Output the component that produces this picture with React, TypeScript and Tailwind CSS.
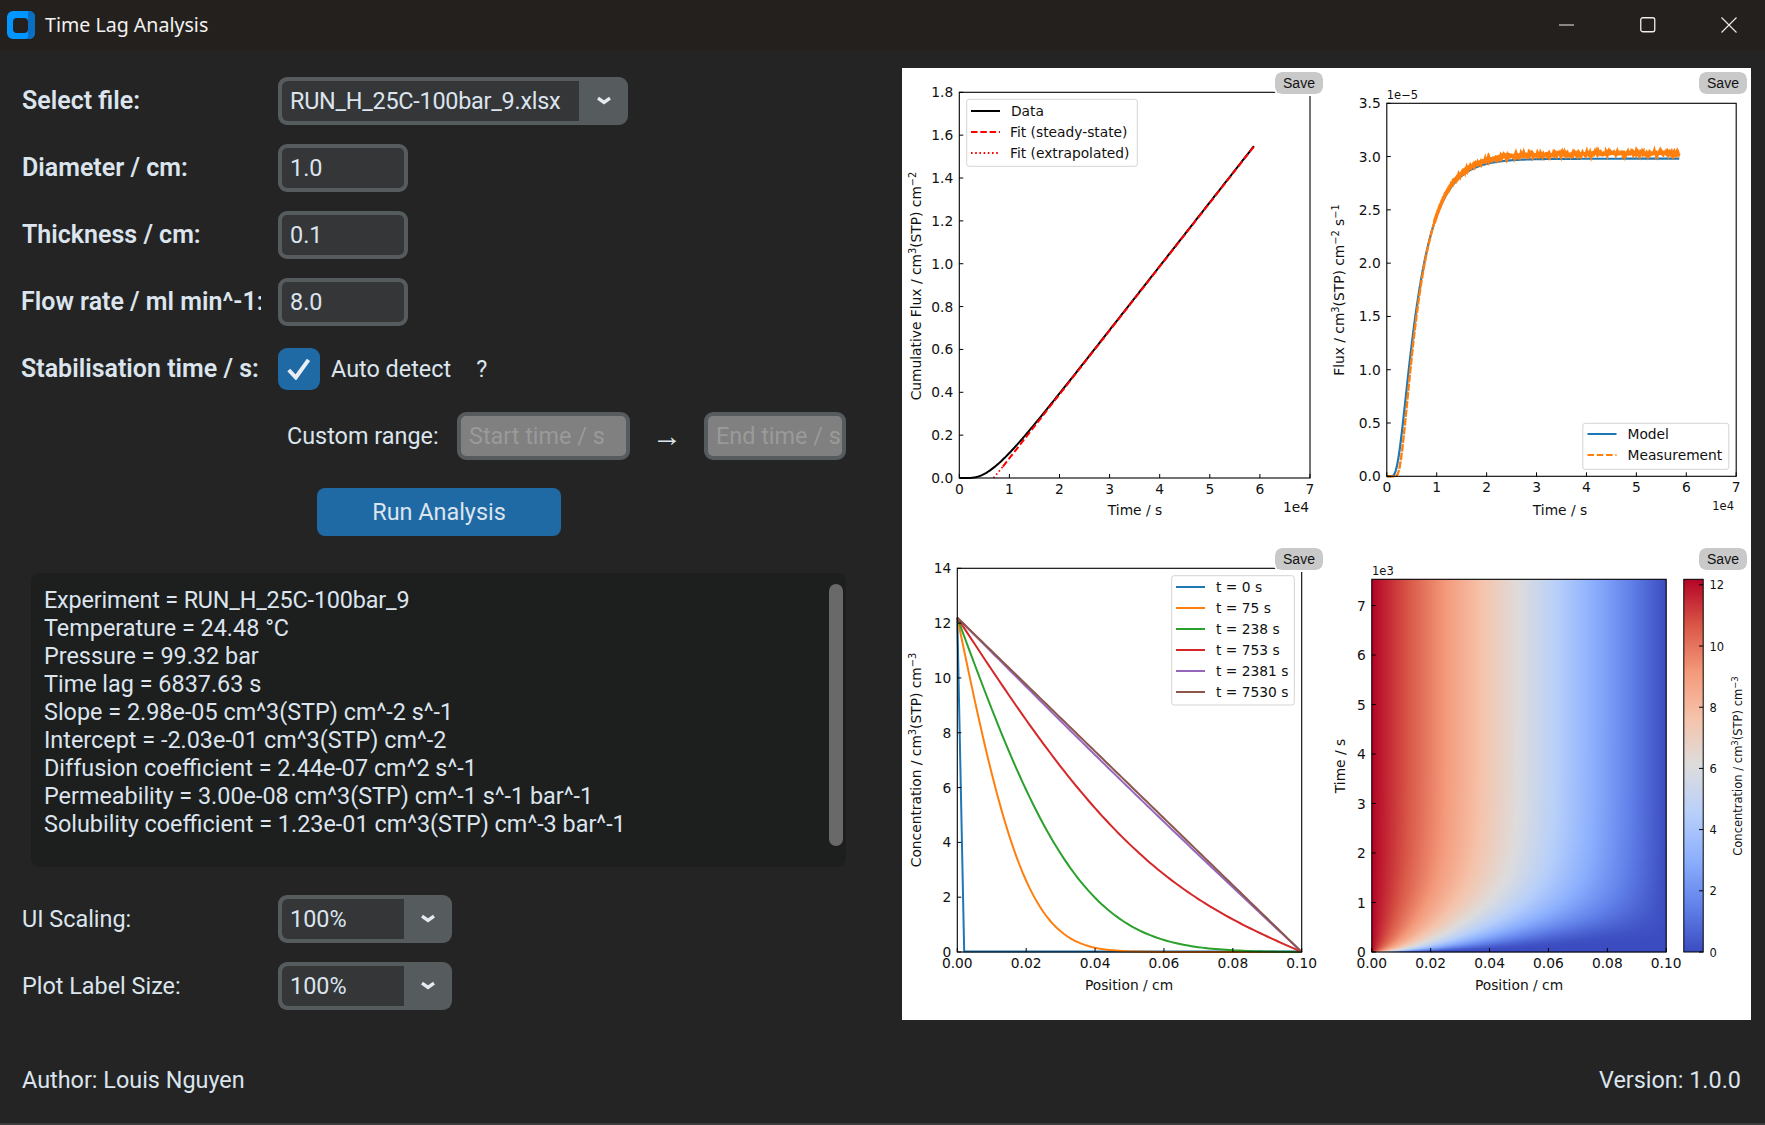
import React from "react";

const L = 0.1;
const C0 = 12.2;
function conc(x: number, tau: number) {
  let s = 1 - x / L;
  for (let n = 1; n <= 70; n++) {
    const e = Math.exp(-n * n * Math.PI * Math.PI * tau);
    if (e < 1e-7) break;
    s -= (2 / (n * Math.PI)) * Math.sin((n * Math.PI * x) / L) * e;
  }
  return C0 * Math.max(0, s);
}
const KC = 1.72e-4;
const KF = 2.44e-5;
function flux(t: number) {
  if (t <= 0) return 0;
  const tau = KF * t;
  let s = 1;
  for (let n = 1; n <= 60; n++) {
    const e = Math.exp(-n * n * Math.PI * Math.PI * tau);
    if (e < 1e-7) break;
    s += 2 * (n % 2 ? -1 : 1) * e;
  }
  return Math.max(0, 2.98 * s);
}
function cum(t: number) {
  if (t <= 0) return 0;
  let q = 0;
  const tau = KF * t;
  let s = t - 1 / (6 * KF);
  for (let n = 1; n <= 60; n++) {
    const e = Math.exp(-n * n * Math.PI * Math.PI * tau);
    if (e < 1e-7) break;
    s -= ((2 / (KF * Math.PI * Math.PI)) * (n % 2 ? -1 : 1) * e) / (n * n);
  }
  q = 2.98e-5 * s;
  return Math.max(0, q);
}
const CW: [number, number, number, number][] = [
  [0, 59, 76, 192],
  [0.125, 98, 130, 234],
  [0.25, 141, 176, 254],
  [0.375, 184, 208, 249],
  [0.5, 221, 220, 220],
  [0.625, 245, 196, 172],
  [0.75, 244, 154, 123],
  [0.875, 217, 88, 71],
  [1, 180, 4, 38],
];
function coolwarm(v: number) {
  const t = Math.min(1, Math.max(0, v));
  for (let i = 1; i < CW.length; i++) {
    if (t <= CW[i][0]) {
      const a = CW[i - 1];
      const b = CW[i];
      const f = (t - a[0]) / (b[0] - a[0]);
      return `rgb(${Math.round(a[1] + (b[1] - a[1]) * f)},${Math.round(a[2] + (b[2] - a[2]) * f)},${Math.round(a[3] + (b[3] - a[3]) * f)})`;
    }
  }
  return "rgb(180,4,38)";
}

type Box = { x0: number; x1: number; y0: number; y1: number };
const fmt = (p: number) => p.toFixed(2);
const line = (pts: [number, number][]) => pts.map((q, i) => `${i ? "L" : "M"}${fmt(q[0])} ${fmt(q[1])}`).join("");

function Frame({ b, xt, yt }: { b: Box; xt: { at: number; label: string }[]; yt: { at: number; label: string }[] }) {
  return (
    <g>
      <rect x={b.x0} y={b.y1} width={b.x1 - b.x0} height={b.y0 - b.y1} fill="none" stroke="#000" strokeWidth={1.1} />
      {xt.map((t) => (
        <g key={t.label}>
          <line x1={t.at} x2={t.at} y1={b.y0} y2={b.y0 - 4} stroke="#000" />
          <text x={t.at} y={b.y0 + 16} textAnchor="middle">{t.label}</text>
        </g>
      ))}
      {yt.map((t) => (
        <g key={t.label}>
          <line x1={b.x0} x2={b.x0 + 4} y1={t.at} y2={t.at} stroke="#000" />
          <text x={b.x0 - 6} y={t.at + 5} textAnchor="end">{t.label}</text>
        </g>
      ))}
    </g>
  );
}

function ticks(vals: number[], lo: number, hi: number, a: number, b: number, d: number) {
  return vals.map((v) => ({ at: a + ((v - lo) / (hi - lo)) * (b - a), label: v.toFixed(d) }));
}

function Legend({ x, y, w, h, rows }: { x: number; y: number; w: number; h: number; rows: { c: string; dash?: string; label: string; y: number; lx: number; tx: number }[] }) {
  return (
    <g>
      <rect x={x} y={y} width={w} height={h} rx={2.5} fill="#fff" stroke="#d4d4d4" strokeWidth={1} />
      {rows.map((r) => (
        <g key={r.label}>
          <line x1={r.lx} x2={r.lx + 29} y1={r.y} y2={r.y} stroke={r.c} strokeWidth={2} strokeDasharray={r.dash} />
          <text x={r.tx} y={r.y + 4.5}>{r.label}</text>
        </g>
      ))}
    </g>
  );
}

const SVG_CLASS = "block w-full h-full font-[family-name:'DejaVu_Sans',sans-serif] text-[13.8px] fill-[#111]";

function Plot1() {
  const b: Box = { x0: 57.3, x1: 408, y0: 410, y1: 24.3 };
  const X = (t: number) => b.x0 + (t / 7e4) * (b.x1 - b.x0);
  const Y = (v: number) => b.y0 - (v / 1.8) * (b.y0 - b.y1);
  const data: [number, number][] = [];
  for (let t = 0; t <= 58800; t += 200) data.push([X(t), Y(cum(t))]);
  const fit = (t: number) => 2.98e-5 * (t - 6837.63) - 0.002;
  return (
    <svg viewBox="0 0 424.5 476" className={SVG_CLASS}>
      <path d={line(data)} fill="none" stroke="#000" strokeWidth={2} />
      <path d={line([[X(6837), Y(0)], [X(8700), Y(fit(8700))]])} fill="none" stroke="#f00" strokeWidth={1.8} strokeDasharray="1.6 2.6" />
      <path d={line([[X(8700), Y(fit(8700))], [X(58800), Y(fit(58800))]])} fill="none" stroke="#f00" strokeWidth={2} strokeDasharray="6.5 2.8" />
      <Frame b={b} xt={ticks([0, 1, 2, 3, 4, 5, 6, 7], 0, 7, b.x0, b.x1, 0)} yt={ticks([0, 0.2, 0.4, 0.6, 0.8, 1, 1.2, 1.4, 1.6, 1.8], 0, 1.8, b.y0, b.y1, 1)} />
      <Legend x={64.7} y={31.3} w={170.6} h={67} rows={[
        { c: "#000", label: "Data", y: 43, lx: 69, tx: 109 },
        { c: "#f00", dash: "6.5 2.8", label: "Fit (steady-state)", y: 64, lx: 69, tx: 108 },
        { c: "#f00", dash: "1.6 2.6", label: "Fit (extrapolated)", y: 85, lx: 69, tx: 108 },
      ]} />
      <text x={233} y={447} textAnchor="middle">Time / s</text>
      <text x={407} y={444} textAnchor="end">1e4</text>
      <text transform="translate(18.5 218) rotate(-90)" textAnchor="middle">
        Cumulative Flux / cm<tspan dy={-5} fontSize={9.8}>3</tspan><tspan dy={5}>(STP) cm</tspan><tspan dy={-5} fontSize={9.8}>−2</tspan>
      </text>
    </svg>
  );
}

function Plot2() {
  const b: Box = { x0: 59.8, x1: 409.2, y0: 408.3, y1: 35.3 };
  const X = (t: number) => b.x0 + (t / 7e4) * (b.x1 - b.x0);
  const Y = (v: number) => b.y0 - (v / 3.5) * (b.y0 - b.y1);
  const model: [number, number][] = [];
  for (let t = 0; t <= 58600; t += 200) model.push([X(t), Y(flux(t))]);
  let seed = 12345;
  const rnd = () => {
    seed = (seed * 1103515245 + 12345) & 0x7fffffff;
    return seed / 0x7fffffff - 0.5;
  };
  const meas = (t: number) => {
    const delay = 1150 * Math.exp(-t / 3800);
    return flux(t - delay) * (1 + 0.019 * (1 - Math.exp(-t / 22000)));
  };
  const low: [number, number][] = [];
  for (let t = 0; t <= 10000; t += 60) low.push([X(t), Y(meas(t))]);
  const high: [number, number][] = [];
  for (let t = 9500; t <= 58600; t += 60) high.push([X(t), Y(meas(t) + Math.min(0.014, t / 2e6) * rnd() * 2)]);
  return (
    <svg viewBox="0 0 424.5 476" className={SVG_CLASS}>
      <path d={line(model)} fill="none" stroke="#1f77b4" strokeWidth={2.2} />
      <path d={line(low)} fill="none" stroke="#ff7f0e" strokeWidth={2.4} strokeDasharray="7.5 1.2" />
      <path d={line(high)} fill="none" stroke="#ff7f0e" strokeWidth={3.5} />
      <Frame b={b} xt={ticks([0, 1, 2, 3, 4, 5, 6, 7], 0, 7, b.x0, b.x1, 0)} yt={ticks([0, 0.5, 1, 1.5, 2, 2.5, 3, 3.5], 0, 3.5, b.y0, b.y1, 1)} />
      <Legend x={255.8} y={355.3} w={146} h={46} rows={[
        { c: "#1f77b4", label: "Model", y: 366, lx: 260.5, tx: 300.5 },
        { c: "#ff7f0e", dash: "6.5 2.8", label: "Measurement", y: 387, lx: 260.5, tx: 300.5 },
      ]} />
      <text x={233} y={447} textAnchor="middle">Time / s</text>
      <text x={407} y={442} textAnchor="end" fontSize={11.5}>1e4</text>
      <text x={59.8} y={30.5} fontSize={11.5}>1e−5</text>
      <text transform="translate(17 222) rotate(-90)" textAnchor="middle">
        Flux / cm<tspan dy={-5} fontSize={9.8}>3</tspan><tspan dy={5}>(STP) cm</tspan><tspan dy={-5} fontSize={9.8}>−2</tspan><tspan dy={5}> s</tspan><tspan dy={-5} fontSize={9.8}>−1</tspan>
      </text>
    </svg>
  );
}

function Plot3() {
  const b: Box = { x0: 55.3, x1: 399.7, y0: 408, y1: 24.3 };
  const X = (x: number) => b.x0 + (x / L) * (b.x1 - b.x0);
  const Y = (v: number) => b.y0 - (v / 14) * (b.y0 - b.y1);
  const curve = (t: number) => {
    const pts: [number, number][] = [];
    for (let i = 0; i <= 100; i++) pts.push([X((i / 100) * L), Y(conc((i / 100) * L, KC * t))]);
    return line(pts);
  };
  const blue = line([[X(0), Y(12.2)], [X(0.002), Y(0.02)], [X(0.1), Y(0.02)]]);
  return (
    <svg viewBox="0 0 424.5 476" className={SVG_CLASS}>
      <path d={blue} fill="none" stroke="#1f77b4" strokeWidth={2} />
      <path d={curve(75)} fill="none" stroke="#ff7f0e" strokeWidth={2} />
      <path d={curve(238)} fill="none" stroke="#2ca02c" strokeWidth={2} />
      <path d={curve(753)} fill="none" stroke="#d62728" strokeWidth={2} />
      <path d={curve(2381)} fill="none" stroke="#9467bd" strokeWidth={2} />
      <path d={curve(7530)} fill="none" stroke="#8c564b" strokeWidth={2} />
      <Frame b={b} xt={ticks([0, 0.02, 0.04, 0.06, 0.08, 0.1], 0, 0.1, b.x0, b.x1, 2)} yt={ticks([0, 2, 4, 6, 8, 10, 12, 14], 0, 14, b.y0, b.y1, 0)} />
      <Legend x={269.7} y={31.7} w={122.6} h={129.3} rows={[
        { c: "#1f77b4", label: "t = 0 s", y: 43, lx: 274, tx: 314 },
        { c: "#ff7f0e", label: "t = 75 s", y: 64, lx: 274, tx: 314 },
        { c: "#2ca02c", label: "t = 238 s", y: 85, lx: 274, tx: 314 },
        { c: "#d62728", label: "t = 753 s", y: 106, lx: 274, tx: 314 },
        { c: "#9467bd", label: "t = 2381 s", y: 127, lx: 274, tx: 314 },
        { c: "#8c564b", label: "t = 7530 s", y: 148, lx: 274, tx: 314 },
      ]} />
      <text x={227} y={446} textAnchor="middle">Position / cm</text>
      <text transform="translate(18.5 216) rotate(-90)" textAnchor="middle">
        Concentration / cm<tspan dy={-5} fontSize={9.8}>3</tspan><tspan dy={5}>(STP) cm</tspan><tspan dy={-5} fontSize={9.8}>−3</tspan>
      </text>
    </svg>
  );
}

function Plot4() {
  const b: Box = { x0: 44.8, x1: 339.2, y0: 408, y1: 35.3 };
  const H = b.y0 - b.y1;
  const rows: { y: number; h: number; t: number }[] = [];
  let py = 0;
  while (py < H) {
    const h = Math.min(py < 110 ? 1 : 4, H - py);
    const t = ((py + h / 2) / H) * 7530;
    rows.push({ y: b.y0 - py - h, h, t });
    py += h;
  }
  const N = 48;
  const vmax = 12.18;
  const stops = Array.from({ length: N + 1 }, (_, i) => Math.pow(i / N, 1.5));
  const bar = Array.from({ length: 17 }, (_, i) => i / 16);
  return (
    <svg viewBox="0 0 424.5 476" className={SVG_CLASS}>
      <defs>
        {rows.map((r, i) => (
          <linearGradient key={i} id={`hm${i}`} x1="0" x2="1" y1="0" y2="0">
            {stops.map((s, j) => (
              <stop key={j} offset={s} stopColor={coolwarm(conc(s * L, KC * r.t) / vmax)} />
            ))}
          </linearGradient>
        ))}
        <linearGradient id="cbar" x1="0" x2="0" y1="1" y2="0">
          {bar.map((s) => (
            <stop key={s} offset={s} stopColor={coolwarm(s)} />
          ))}
        </linearGradient>
      </defs>
      {rows.map((r, i) => (
        <rect key={i} x={b.x0} y={Math.max(b.y1, r.y - 0.3)} width={b.x1 - b.x0} height={i === rows.length - 1 ? r.h : r.h + 0.6} fill={`url(#hm${i})`} />
      ))}
      <Frame b={b} xt={ticks([0, 0.02, 0.04, 0.06, 0.08, 0.1], 0, 0.1, b.x0, b.x1, 2)} yt={ticks([0, 1, 2, 3, 4, 5, 6, 7], 0, 7.53, b.y0, b.y1, 0)} />
      <text x={45} y={31} fontSize={11.5}>1e3</text>
      <text x={192} y={446} textAnchor="middle">Position / cm</text>
      <text transform="translate(18 222) rotate(-90)" textAnchor="middle">Time / s</text>
      <rect x={356.8} y={b.y1} width={19.4} height={H} fill="url(#cbar)" stroke="#000" strokeWidth={1} />
      {[0, 2, 4, 6, 8, 10, 12].map((v) => {
        const y = b.y0 - (v / vmax) * H;
        return (
          <g key={v}>
            <line x1={372} x2={376.2} y1={y} y2={y} stroke="#000" />
            <text x={382.5} y={y + 4.5} fontSize={11.5}>{v}</text>
          </g>
        );
      })}
      <text transform="translate(414.5 222) rotate(-90)" textAnchor="middle" fontSize={11.5}>
        Concentration / cm<tspan dy={-4} fontSize={8.5}>3</tspan><tspan dy={4}>(STP) cm</tspan><tspan dy={-4} fontSize={8.5}>−3</tspan>
      </text>
    </svg>
  );
}

function Cell({ children, save }: { children: React.ReactNode; save: string }) {
  return (
    <div className="relative min-w-0 min-h-0">
      {children}
      <button className={`absolute ${save} w-[48px] h-[22px] rounded-[7px] bg-[#c9c9c9] outline-2 outline-white text-[14px] text-[#111] font-[family-name:'Liberation_Sans',sans-serif] leading-none`}>Save</button>
    </div>
  );
}

function Chevron() {
  return (
    <svg width="16" height="10" viewBox="0 0 16 10" className="block">
      <path d="M2 2.2 L8 6.4 L14 2.2" fill="none" stroke="#e4eaf0" strokeWidth={3.4} />
    </svg>
  );
}

const inputCls = "h-[48px] border-[4px] border-[#565b5e] bg-[#343638] rounded-[9px] pl-[8px] flex items-center overflow-hidden whitespace-nowrap";

function Row({ label, bold, children, px }: { label: string; bold?: boolean; children: React.ReactNode; px?: string }) {
  return (
    <div className="flex items-center h-[48px] mb-[19px]">
      <div className={`${px ?? "pl-[22px] w-[278px]"} shrink-0 overflow-hidden whitespace-nowrap ${bold ? "font-semibold text-[25px]" : ""}`}>
        {label}
      </div>
      {children}
    </div>
  );
}

function Select({ value, w, btn, tight }: { value: string; w: string; btn: string; tight?: boolean }) {
  return (
    <div className={`${w} h-[48px] rounded-[9px] bg-[#565b5e] p-[4px] pr-0 flex`}>
      <div className={`flex-1 min-w-0 bg-[#343638] rounded-l-[6px] pl-[8px] flex items-center whitespace-nowrap overflow-hidden ${tight ? "tracking-[-0.25px]" : ""}`}>{value}</div>
      <div className={`${btn} shrink-0 flex items-center justify-center`}><Chevron /></div>
    </div>
  );
}

const results = [
  "Temperature = 24.48 °C",
  "Pressure = 99.32 bar",
  "Time lag = 6837.63 s",
  "Slope = 2.98e-05 cm^3(STP) cm^-2 s^-1",
  "Intercept = -2.03e-01 cm^3(STP) cm^-2",
  "Diffusion coefficient = 2.44e-07 cm^2 s^-1",
  "Permeability = 3.00e-08 cm^3(STP) cm^-1 s^-1 bar^-1",
  "Solubility coefficient = 1.23e-01 cm^3(STP) cm^-3 bar^-1",
];

export default function App() {
  return (
    <div className="w-[1765px] h-[1125px] overflow-hidden bg-[#242424] border-b-2 border-[#3c3c3c] text-[#dce4ee] text-[23.4px] leading-[28px] font-[family-name:Roboto,sans-serif] flex flex-col">
      <div className="h-[50px] shrink-0 bg-[#24201d] flex items-center relative">
        <svg width="28" height="28" viewBox="0 0 28 28" className="ml-[7px] block">
          <rect width="28" height="28" rx="6" fill="#0095ff" />
          <path d="M21 0 H22 A6 6 0 0 1 28 6 V22 A6 6 0 0 1 22 28 H19 L21 26 V2 Z" fill="#0a6fc2" />
          <rect x="6" y="7" width="15" height="15" rx="4" fill="#24201d" />
        </svg>
        <span className="ml-[10px] text-[19.6px] font-[family-name:'Noto_Sans',sans-serif] text-[#f2f2f2]">Time Lag Analysis</span>
        <div className="ml-auto flex items-center text-white">
          <svg width="81" height="16" viewBox="0 0 81 16" className="block"><path d="M0 8 H15" stroke="#eee" strokeWidth="1" fill="none" /></svg>
          <svg width="81" height="16" viewBox="0 0 81 16" className="block"><rect x="0.75" y="0.75" width="14" height="14" rx="2" stroke="#eee" strokeWidth="1.3" fill="none" /></svg>
          <svg width="44" height="16" viewBox="0 0 44 16" className="block"><path d="M0.5 0.5 L15.5 15.5 M15.5 0.5 L0.5 15.5" stroke="#eee" strokeWidth="1.1" fill="none" /></svg>
        </div>
      </div>

      <div className="flex flex-1 min-h-0">
        <div className="w-[902px] shrink-0 pt-[27px]">
          <Row label="Select file:" bold>
            <Select value="RUN_H_25C-100bar_9.xlsx" w="w-[350px]" btn="w-[49px]" tight />
          </Row>
          <Row label="Diameter / cm:" bold>
            <div className={`${inputCls} w-[130px]`}>1.0</div>
          </Row>
          <Row label="Thickness / cm:" bold>
            <div className={`${inputCls} w-[130px]`}>0.1</div>
          </Row>
          <Row label="Flow rate / ml min^-1:" bold px="pl-[21px] w-[261px] mr-[17px]">
            <div className={`${inputCls} w-[130px]`}>8.0</div>
          </Row>
          <Row label="Stabilisation time / s:" bold px="pl-[21px] w-[261px] mr-[17px]">
            <div className="w-[42px] h-[42px] rounded-[9px] bg-[#1f6aa5] flex items-center justify-center">
              <svg width="24" height="22" viewBox="0 0 24 22" className="block"><path d="M1.8 12 L8.8 19.5 L21.5 1.8" fill="none" stroke="#e8eef4" strokeWidth="4" /></svg>
            </div>
            <span className="ml-[11px]">Auto detect</span>
            <span className="ml-[25px]">?</span>
          </Row>
          <div className="flex items-center h-[48px] pl-[287px]">
            <span className="w-[170px] shrink-0">Custom range:</span>
            <div className="w-[173px] h-[48px] border-[4px] border-[#565b5e] bg-[#808080] rounded-[9px] pl-[8px] flex items-center text-[#9a9a9a] overflow-hidden whitespace-nowrap">Start time / s</div>
            <span className="w-[74px] text-center text-[30px] font-[family-name:'Liberation_Sans',sans-serif]">→</span>
            <div className="w-[142px] h-[48px] border-[4px] border-[#565b5e] bg-[#808080] rounded-[9px] pl-[8px] flex items-center text-[#9a9a9a] overflow-hidden whitespace-nowrap">End time / s</div>
          </div>
          <button className="block ml-[317px] mt-[28px] w-[244px] h-[48px] rounded-[8px] bg-[#1f6aa5] text-[23.4px]">Run Analysis</button>
          <div className="relative ml-[31px] mt-[37px] w-[815px] h-[294px] rounded-[9px] bg-[#1d1e1e] pl-[13px] pt-[13px]">
            <div className="whitespace-nowrap tracking-[-0.18px]">Experiment = RUN_H_25C-100bar_9</div>
            {results.map((r) => (
              <div key={r} className="whitespace-nowrap">{r}</div>
            ))}
            <div className="absolute right-[3px] top-[11px] w-[14px] h-[262px] rounded-[7px] bg-[#696969]" />
          </div>
          <div className="mt-[28px]">
            <Row label="UI Scaling:">
              <Select value="100%" w="w-[174px]" btn="w-[48px]" />
            </Row>
            <Row label="Plot Label Size:">
              <Select value="100%" w="w-[174px]" btn="w-[48px]" />
            </Row>
          </div>
        </div>
        <div className="mt-[18px] w-[849px] h-[952px] bg-white grid grid-cols-2 grid-rows-2">
          <Cell save="left-[373px] top-[4px]"><Plot1 /></Cell>
          <Cell save="left-[372.5px] top-[4px]"><Plot2 /></Cell>
          <Cell save="left-[373px] top-[4px]"><Plot3 /></Cell>
          <Cell save="left-[372.5px] top-[4px]"><Plot4 /></Cell>
        </div>
      </div>

      <div className="h-[73px] shrink-0 flex items-start justify-between pl-[22px] pr-[24px] pt-[16px]">
        <span>Author: Louis Nguyen</span>
        <span>Version: 1.0.0</span>
      </div>
    </div>
  );
}
